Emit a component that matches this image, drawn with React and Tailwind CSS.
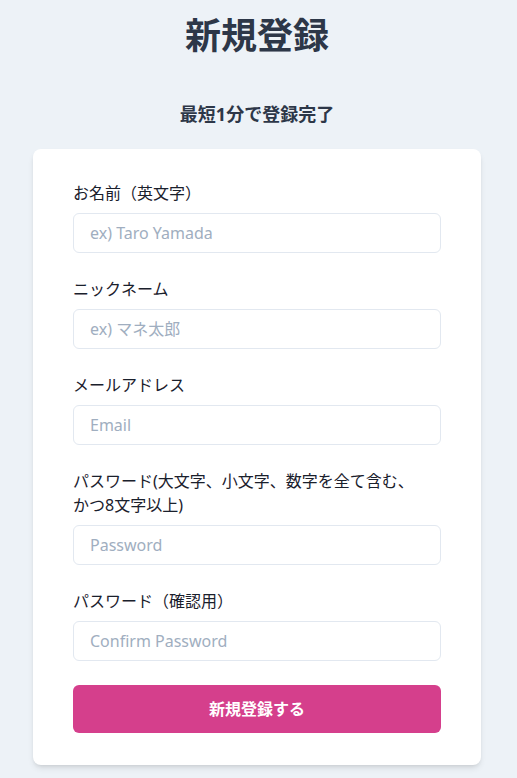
import React from 'react'

const fields = [
  { label: 'お名前（英文字）', placeholder: 'ex) Taro Yamada', type: 'text' },
  { label: 'ニックネーム', placeholder: 'ex) マネ太郎', type: 'text' },
  { label: 'メールアドレス', placeholder: 'Email', type: 'email' },
  {
    label: 'パスワード(大文字、小文字、数字を全て含む、\nかつ8文字以上)',
    placeholder: 'Password',
    type: 'password',
  },
  { label: 'パスワード（確認用）', placeholder: 'Confirm Password', type: 'password' },
]

export default function App() {
  return (
    <div
      className="min-h-screen bg-[#edf2f7] pt-4 pr-[3px] pb-10 text-[#1a202c]"
      style={{ fontFamily: '"Noto Sans", "Noto Sans CJK JP", sans-serif' }}
    >
      <h1 className="text-center text-4xl leading-10 font-bold text-[#2d3748]">新規登録</h1>
      <p className="mt-[44px] text-center text-lg leading-7 font-bold text-[#2d3748]">最短1分で登録完了</p>
      <div className="mx-auto mt-[21px] w-[448px] rounded-lg bg-white px-10 py-8 shadow-md">
        <form className="space-y-6">
          {fields.map((f) => (
            <div key={f.placeholder}>
              <label className="mb-2 block text-base leading-6 whitespace-pre-line">{f.label}</label>
              <input
                type={f.type}
                placeholder={f.placeholder}
                className="h-10 w-full rounded-md border border-[#e2e8f0] bg-white px-4 text-base outline-none placeholder:text-[#a0aec0]"
              />
            </div>
          ))}
          <button
            type="button"
            className="h-12 w-full rounded-md bg-[#d53f8c] text-base font-bold text-white"
          >
            新規登録する
          </button>
        </form>
      </div>
    </div>
  )
}
